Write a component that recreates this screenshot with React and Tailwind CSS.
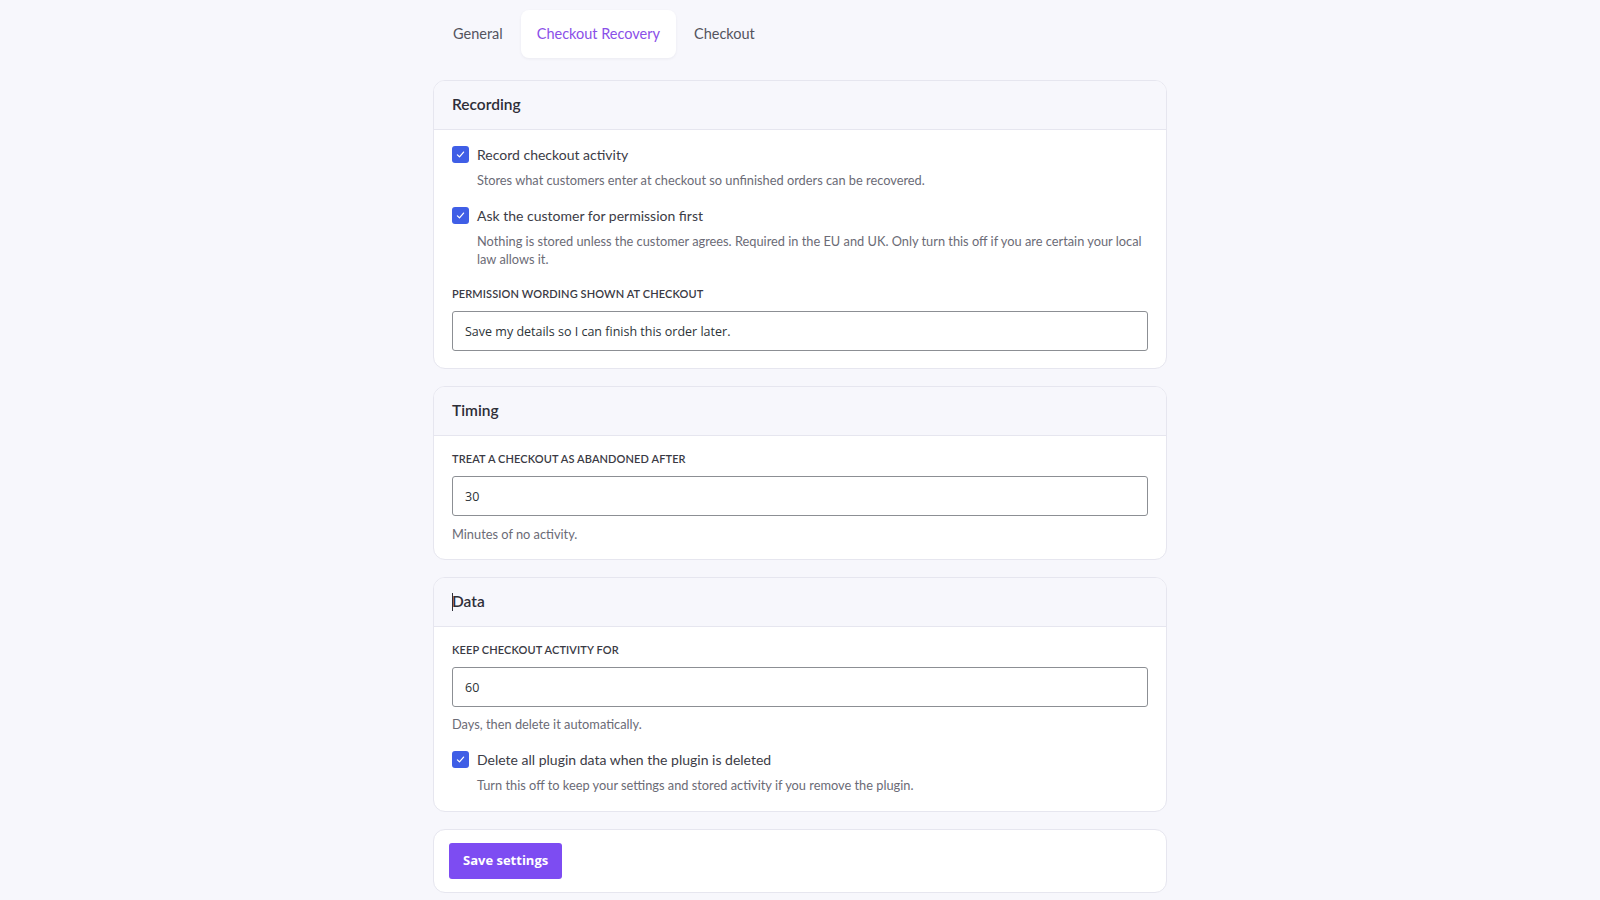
import { useState } from "react";

const TABS = ["General", "Checkout Recovery", "Checkout"];

function CheckIcon() {
    return (
        <svg viewBox="0 0 16 16" className="h-[11px] w-[11px]" fill="none">
            <path d="M3.5 8.5l3 3 6-7" stroke="white" strokeWidth="1.8" strokeLinecap="round" strokeLinejoin="round" />
        </svg>
    );
}

function CheckRow({ checked, onToggle, label, children }) {
    return (
        <div>
            <label className="flex h-5 cursor-pointer items-center gap-2">
                <span
                    onClick={onToggle}
                    className={`flex h-[17px] w-[17px] items-center justify-center rounded-[3px] ${checked ? "bg-[#3f5ee6]" : "border border-[#8c8f94] bg-white"}`}
                >
                    {checked ? <CheckIcon /> : null}
                </span>
                <span className="text-[14px] text-[#3c3c46]">{label}</span>
            </label>
            <p className="mt-[7px] pl-[25px] text-[12.8px] leading-[18px] text-[#6b6b76]">{children}</p>
        </div>
    );
}

function FieldLabel({ children }) {
    return (
        <div className="h-4 text-[11px] font-semibold uppercase leading-4 tracking-[0.01em] text-[#3a3a44]">
            {children}
        </div>
    );
}

function TextInput({ value, onChange }) {
    return (
        <input
            type="text"
            value={value}
            onChange={(e) => onChange(e.target.value)}
            className="mt-[9px] block h-10 w-full rounded-[3px] border border-[#8c8f94] bg-white px-[12px] text-[12.5px] text-[#2c3338] outline-none"
            style={{ fontFamily: '"Open Sans", "Noto Sans", sans-serif' }}
        />
    );
}

function Card({ title, caret, tight, children }) {
    return (
        <div className="overflow-hidden rounded-xl border border-[#e6e6ef] bg-white">
            <div className="flex h-[49px] items-center border-b border-[#e6e6ef] bg-[#f7f7fc] px-[18px]">
                <h2 className="flex items-center text-[15.5px] font-semibold text-[#2e2e38]">
                    {caret ? <span className="mr-[-1px] inline-block h-[18px] w-px bg-[#2e2e38]" /> : null}
                    {title}
                </h2>
            </div>
            <div className={`px-[18px] pt-[14px] ${tight ? "pb-4" : "pb-[17px]"}`}>{children}</div>
        </div>
    );
}

export default function App() {
    const [tab, setTab] = useState("Checkout Recovery");
    const [record, setRecord] = useState(true);
    const [ask, setAsk] = useState(true);
    const [wipe, setWipe] = useState(true);
    const [wording, setWording] = useState("Save my details so I can finish this order later.");
    const [minutes, setMinutes] = useState("30");
    const [days, setDays] = useState("60");

    return (
        <div
            className="min-h-screen bg-[#f7f7fc]"
            style={{ fontFamily: 'Lato, "Noto Sans", sans-serif' }}
        >
            <div className="mx-auto w-[734px] pt-[10px] pb-6">
                <div className="flex gap-[2px] pl-[4px]">
                    {TABS.map((t) => (
                        <button
                            key={t}
                            type="button"
                            onClick={() => setTab(t)}
                            className={`h-12 rounded-lg px-4 text-[14.5px] ${tab === t ? "bg-white text-[#8a4fe8] shadow-[0_1px_3px_rgba(30,30,60,0.06)]" : "text-[#54545e]"}`}
                        >
                            {t}
                        </button>
                    ))}
                </div>

                <div className="mt-[22px] flex flex-col gap-[17px]">
                    <Card title="Recording">
                        <CheckRow checked={record} onToggle={() => setRecord(!record)} label="Record checkout activity">
                            Stores what customers enter at checkout so unfinished orders can be recovered.
                        </CheckRow>
                        <div className="mt-4">
                            <CheckRow checked={ask} onToggle={() => setAsk(!ask)} label="Ask the customer for permission first">
                                Nothing is stored unless the customer agrees. Required in the EU and UK. Only turn this off if you are certain your local law allows it.
                            </CheckRow>
                        </div>
                        <div className="mt-[18px]">
                            <FieldLabel>Permission wording shown at checkout</FieldLabel>
                            <TextInput value={wording} onChange={setWording} />
                        </div>
                    </Card>

                    <Card title="Timing" tight>
                        <div className="pt-px">
                            <FieldLabel>Treat a checkout as abandoned after</FieldLabel>
                        </div>
                        <TextInput value={minutes} onChange={setMinutes} />
                        <p className="mt-[9px] text-[12.8px] leading-[18px] text-[#6b6b76]">Minutes of no activity.</p>
                    </Card>

                    <Card title="Data" caret>
                        <div className="pt-px">
                            <FieldLabel>Keep checkout activity for</FieldLabel>
                        </div>
                        <TextInput value={days} onChange={setDays} />
                        <p className="mt-2 text-[12.8px] leading-[18px] text-[#6b6b76]">Days, then delete it automatically.</p>
                        <div className="mt-4">
                            <CheckRow checked={wipe} onToggle={() => setWipe(!wipe)} label="Delete all plugin data when the plugin is deleted">
                                Turn this off to keep your settings and stored activity if you remove the plugin.
                            </CheckRow>
                        </div>
                    </Card>

                    <div className="rounded-xl border border-[#e6e6ef] bg-white px-[15px] py-[13px]">
                        <button
                            type="button"
                            className="h-9 rounded-[3px] bg-[#7d4cf2] px-[14px] text-[13px] font-bold text-white"
                            style={{ fontFamily: '"Open Sans", sans-serif' }}
                        >
                            Save settings
                        </button>
                    </div>
                </div>
            </div>
        </div>
    );
}
